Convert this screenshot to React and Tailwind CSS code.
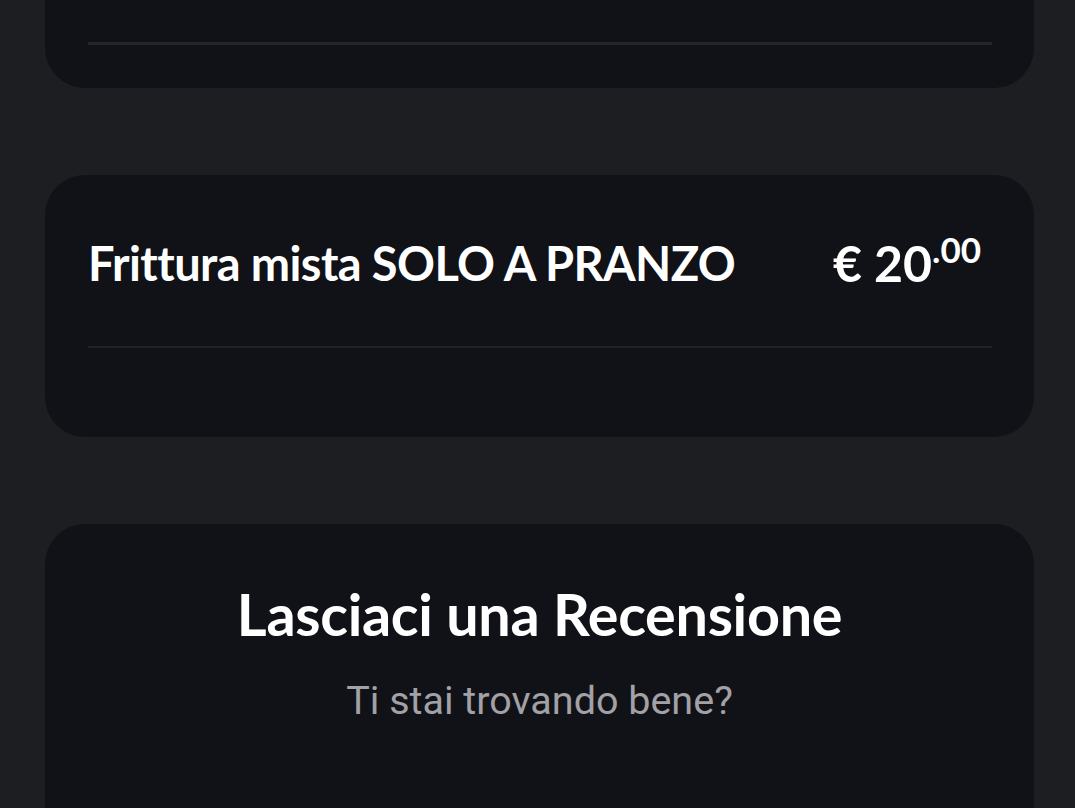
export default function App() {
  return (
    <div className="h-[808px] overflow-hidden bg-[#1d1e22] pl-[45px] pr-[41px]">
      <div className="flex flex-col gap-[87px]">
        <div className="-mt-[200px] h-[288px] rounded-[40px] bg-[#111217] pl-[43px] pr-[42px] flex flex-col justify-end pb-[43px]">
          <div className="h-[3px] bg-[#24252b]" />
        </div>
        <div className="h-[262px] rounded-[40px] bg-[#111217] pl-[43px] pr-[42px] pt-[58px]">
          <div className="flex items-start justify-between pr-[11px] font-['Lato',sans-serif] font-bold text-white">
            <div className="text-[47px] leading-[60px] tracking-[-0.6px]">Frittura mista SOLO A PRANZO</div>
            <div className="flex items-start leading-[60px]">
              <span className="text-[50px] leading-[58px] mt-[1px]">€ 20</span>
              <span className="text-[35px] leading-[40px] -mt-[4px]">.00</span>
            </div>
          </div>
          <div className="mt-[53px] h-[2px] bg-[#22232a]" />
        </div>
        <div className="h-[400px] rounded-[40px] bg-[#111217] flex flex-col items-center pt-[54px]">
          <div className="font-['Lato',sans-serif] font-bold text-white text-[57.5px] leading-[72px] tracking-[-0.3px]">Lasciaci una Recensione</div>
          <div className="mt-[27px] font-['Roboto',sans-serif] text-[#a1a1a6] text-[39.5px] leading-[48px]">Ti stai trovando bene?</div>
        </div>
      </div>
    </div>
  );
}
